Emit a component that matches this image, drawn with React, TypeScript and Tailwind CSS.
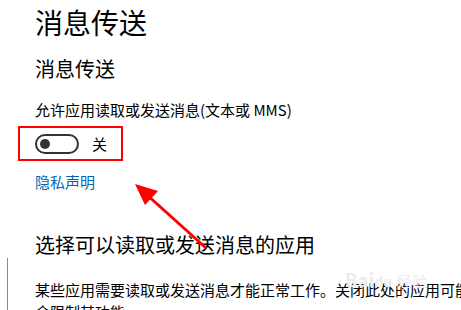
export default function App() {
  return (
    <div
      className="relative w-[461px] h-[310px] overflow-hidden bg-white text-[#000]"
      style={{ fontFamily: '"Microsoft YaHei", "Noto Sans CJK SC", sans-serif' }}
    >
      <div className="pl-[35px] pt-[4px]">
        <h1 className="text-[28px] leading-[36px] font-normal">消息传送</h1>
        <h2 className="mt-[15px] text-[20px] leading-[28px] font-normal">消息传送</h2>
        <p className="mt-[17px] text-[15px] leading-[20px] whitespace-nowrap">允许应用读取或发送消息(文本或 MMS)</p>
        <div className="mt-[14px] flex items-center h-[20px]">
          <div className="w-[44px] h-[20px] rounded-full border-2 border-[#333] flex items-center pl-[3px]">
            <div className="w-[10px] h-[10px] rounded-full bg-[#333]" />
          </div>
          <span className="ml-[13px] text-[15px] leading-[20px]">关</span>
        </div>
        <a className="block mt-[18px] text-[15px] leading-[20px] text-[#0067b8]">隐私声明</a>
        <h2 className="mt-[39px] text-[20px] leading-[28px] font-normal whitespace-nowrap">选择可以读取或发送消息的应用</h2>
        <p className="mt-[20px] text-[15px] leading-[22px] whitespace-nowrap">
          某些应用需要读取或发送消息才能正常工作。关闭此处的应用可能
          <br />
          会限制其功能。
        </p>
      </div>

      {/* left edge line */}
      <div className="absolute left-[7px] top-[258px] w-[1px] h-[60px] bg-[#888]" />

      {/* red annotation box */}
      <div className="absolute left-[18px] top-[126px] w-[105px] h-[35px] border-2 border-[#f00]" />

      {/* red arrow */}
      <svg className="absolute left-0 top-0" width="461" height="310">
        <line x1="206" y1="248" x2="146" y2="194" stroke="#f00" strokeWidth="3" />
        <polygon points="135,184 158,191 145,205" fill="#f00" />
      </svg>

      {/* watermark */}
      <div className="absolute left-[345px] top-[266px] text-[18px] text-[#ececec] font-bold tracking-wide pointer-events-none">
        Bai<span className="text-[13px]">du</span> <span className="font-normal text-[15px]">经验</span>
      </div>
    </div>
  )
}
